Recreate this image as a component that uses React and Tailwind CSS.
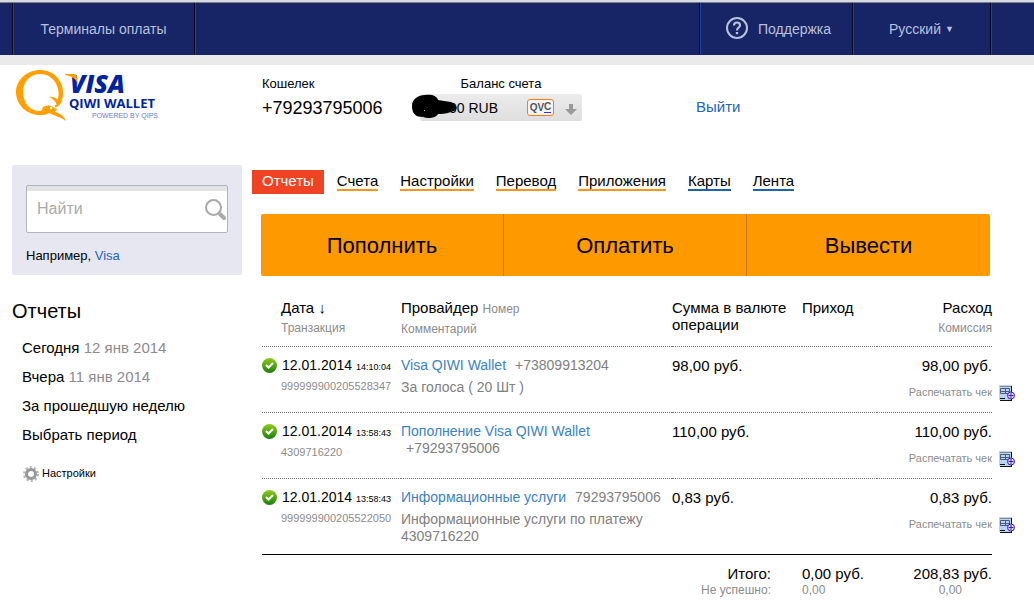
import React, { useState } from 'react';

const tabs = [
  { name: 'Счета', color: 'border-[#f7981d]' },
  { name: 'Настройки', color: 'border-[#f7981d]' },
  { name: 'Перевод', color: 'border-[#f7981d]' },
  { name: 'Приложения', color: 'border-[#f7981d]' },
  { name: 'Карты', color: 'border-[#1f63ad]' },
  { name: 'Лента', color: 'border-[#1f63ad]' },
];

const periods = [
  { name: 'Сегодня', date: '12 янв 2014' },
  { name: 'Вчера', date: '11 янв 2014' },
  { name: 'За прошедшую неделю' },
  { name: 'Выбрать период' },
];

const payments = [
  {
    id: '999999900205528347',
    date: '12.01.2014',
    time: '14:10:04',
    provider: 'Visa QIWI Wallet',
    number: '+73809913204',
    comment: 'За голоса ( 20 Шт )',
    sum: '98,00 руб.',
  },
  {
    id: '4309716220',
    date: '12.01.2014',
    time: '13:58:43',
    provider: 'Пополнение Visa QIWI Wallet',
    number: '+79293795006',
    numberBelow: true,
    sum: '110,00 руб.',
  },
  {
    id: '999999900205522050',
    date: '12.01.2014',
    time: '13:58:43',
    provider: 'Информационные услуги',
    number: '79293795006',
    comment: 'Информационные услуги по платежу 4309716220',
    sum: '0,83 руб.',
  },
];

const Logo = () => (
  <svg width="146" height="54" viewBox="0 0 146 54" role="img" aria-label="Visa QIWI Wallet" className="overflow-visible">
    <path
      fill="#ff9f00"
      fillRule="evenodd"
      d="M24 1C37 1 47 11 47 23C47 29 46 33 43 37L40 33C43 29 43 25 42 20C40 11 33 5 24 5C14 5 7 13 7 23C7 34 14 42 24 42C28 42 24 39 29 37C35 35 38 39 41 40L39 43C44 44 48 47 50 52C45 48 39 47 33 44C30 46 27 46 24 46C11 46 0 36 0 23C0 11 11 1 24 1Z"
    />
    <path fill="#ff9f00" d="M33 28c5-1 10 2 11 7l-3 3c0-4-3-8-8-10z" />
    <circle cx="35" cy="39" r="1.200" fill="#fff" />
    <circle cx="40" cy="37" r="1.200" fill="#ff9f00" />
    <text x="54" y="24" fontFamily="Open Sans" fontSize="25" fontWeight="800" fontStyle="italic" fill="#0023a0">
      VISA
    </text>
    <path fill="#ff9f00" d="M49 5h9c2 0 3 2 3 4l1 6C60 10 56 7 49 6z" />
    <text x="53" y="39" fontFamily="Open Sans" fontSize="13" fontWeight="700" fill="#0023a0">
      QIWI WALLET
    </text>
    <text x="76" y="49" fontFamily="Liberation Sans" fontSize="7" fill="#6f7cc0">
      POWERED BY QIPS
    </text>
  </svg>
);

const HelpIcon = () => (
  <svg width="24" height="24" viewBox="0 0 24 24" fill="none" stroke="#b9c0dc" strokeWidth="2">
    <circle cx="12" cy="11" r="10" />
    <path d="M9 8.500C9 6.500 10.300 5.500 12 5.500S15 6.500 15 8.200C15 10.500 12 10.500 12 13.500" strokeWidth="2.200" />
    <path d="M12 15v2.200" strokeWidth="2.400" />
  </svg>
);

const SearchIcon = () => (
  <svg width="21" height="21" viewBox="0 0 21 21" fill="none" stroke="#a9a9a9">
    <circle cx="8.500" cy="8.500" r="7.500" strokeWidth="2" />
    <path d="M13.500 13.500l2 2" strokeWidth="3" />
    <path d="M15.500 15.500l3.500 3.500" strokeWidth="4" strokeLinecap="round" />
  </svg>
);

const GearIcon = () => (
  <svg width="16" height="16" viewBox="0 0 16 16" fill="none">
    <circle cx="8" cy="8" r="6.500" stroke="#bbb" strokeWidth="3" strokeDasharray="2.100 1.984" />
    <circle cx="8" cy="8" r="4.500" stroke="#999" strokeWidth="3" />
  </svg>
);

const CheckIcon = () => (
  <svg width="15" height="15" viewBox="0 0 15 15" fill="none" className="mb-[2px] shrink-0">
    <defs>
      <linearGradient id="ok" x1="0" y1="0" x2="0" y2="1">
        <stop offset="0" stopColor="#8fcb1c" />
        <stop offset="1" stopColor="#1c7f0c" />
      </linearGradient>
    </defs>
    <circle cx="7.500" cy="7.500" r="7.500" fill="url(#ok)" />
    <path d="M4 7l2.500 2.500L11 5" stroke="#fff" strokeWidth="2" />
  </svg>
);

const ReceiptIcon = () => (
  <svg width="16" height="16" viewBox="0 0 16 16" fill="none">
    <path d="M0 0h13v15H0z" fill="#b9d3f7" />
    <path d="M12.500 1v15M1 15.500h12" stroke="#111" />
    <path d="M1 1.500h11" stroke="#888" />
    <path d="M1.500 3.500h9v5h-9zM1.500 6.500h9M6.500 3.500v5" stroke="#4a5a78" />
    <path d="M1 13.500h5" stroke="#111" />
    <circle cx="12" cy="10.500" r="3.500" fill="#e4e0ff" stroke="#3a18c8" />
    <path d="M12 8v5M9.500 10.500h5" stroke="#3a18c8" />
  </svg>
);

const Scribble = () => (
  <svg width="47" height="25" viewBox="0 0 47 25" className="absolute -left-[9px] top-0" aria-hidden="true">
    <path d="M1 12C1 5 7 1 14 1C21 0 26 2 27 6L33 7C38 8 42 7 45 12C47 15 44 17 40 18C34 20 30 20 27 20C25 24 17 25 12 23C5 23 1 20 1 12Z" />
    <path d="M13 16l1 1" stroke="#bbb" />
  </svg>
);

const App = () => {
  const [search, setSearch] = useState('');

  return (
    <div className="min-h-screen bg-white font-['Liberation_Sans',Arial,sans-serif] text-[15px] leading-[17px] text-black">
      <header className="border-b-10 border-[#eaeaea]">
        <div className="h-[3px] border-b border-[#808080] bg-[#d6dde2]" />
        <nav className="flex h-[52px] bg-[#172566] pl-3 pr-[43px] text-sm text-[#b9c0dc]">
          <a
            href="#terminals"
            className="flex w-[182px] items-center justify-center border-l border-[#02051c] shadow-[inset_1px_0_#1d43a0,1px_0_#02051c,2px_0_#1d43a0]"
          >
            Терминалы оплаты
          </a>
          <a
            href="#support"
            className="ml-auto flex w-[153px] items-center gap-[9px] border-l border-[#02051c] pl-[25px] shadow-[inset_1px_0_#1d43a0]"
          >
            <HelpIcon />
            Поддержка
          </a>
          <label className="flex w-[139px] items-center justify-center border-x border-[#02051c] shadow-[inset_1px_0_#1d43a0,1px_0_#1d43a0]">
            <span className="sr-only">Язык</span>
            <select className="h-6 appearance-none bg-transparent pr-1 leading-6" defaultValue="ru">
              <option value="ru">Русский</option>
            </select>
            <span className="text-[9px]">▼</span>
          </label>
        </nav>
      </header>

      <div className="flex h-[100px] px-4 pt-1">
        <div className="w-[246px] shrink-0">
          <Logo />
        </div>
        <div className="w-[158px] shrink-0 pt-[6px]">
          <div className="text-[13px]">Кошелек</div>
          <div className="pt-2 text-lg leading-[17px]">+79293795006</div>
        </div>
        <div className="w-[162px] shrink-0 pt-[6px]">
          <div className="text-center text-[13px]">Баланс счета</div>
          <button
            type="button"
            className="relative mt-[2px] flex h-[27px] w-full items-center rounded-xs bg-linear-to-b from-[#ececec] to-[#dedede] pl-[29px] pr-[5px] text-sm"
          >
            <Scribble />
            00 RUB
            <span className="ml-auto mr-[11px] flex h-[17px] w-[27px] items-center justify-center rounded-[3px] border border-[#ff7d0a] bg-[#f4f4f4] text-[10px] font-bold leading-3 text-[#555]">
              QV<span className="border-b border-[#3a2fd0] leading-[10px]">C</span>
            </span>
            <svg width="12" height="12" viewBox="0 0 12 12" fill="#999" className="mt-[3px]">
              <path d="M4 1h4v5h4L6 12 0 6h4z" />
            </svg>
          </button>
        </div>
        <div className="pl-[114px] pt-[29px]">
          <a href="#exit" className="text-[#1d65b8]">
            Выйти
          </a>
        </div>
      </div>

      <div className="flex gap-[10px] pl-3 pr-[19px]">
        <aside className="w-[230px] shrink-0">
          <form className="h-[110px] rounded-xs bg-[#e6e7f0] px-[14px] pt-5">
            <div className="flex h-[48px] items-center rounded-xs border border-[#b0b4bf] bg-white pr-[1px] shadow-[inset_0_5px_#e2e2e2]">
              <input
                type="text"
                aria-label="Поиск"
                placeholder="Найти"
                value={search}
                onChange={(e) => setSearch(e.target.value)}
                className="w-full min-w-0 bg-transparent pl-[10px] text-base outline-none placeholder:text-[#aaa]"
              />
              <button type="submit" aria-label="Найти">
                <SearchIcon />
              </button>
            </div>
            <p className="pt-[14px] text-[13px]">
              Например,{' '}
              <a href="#visa" className="text-[#1d65b8]">
                Visa
              </a>
            </p>
          </form>
          <h1 className="pb-4 pt-6 text-xl leading-6">Отчеты</h1>
          <ul className="flex flex-col gap-3 pl-[10px]">
            {periods.map((period) => (
              <li key={period.name}>
                <a href="#period">
                  {period.name} {period.date && <span className="text-[#8c8c8c]">{period.date}</span>}
                </a>
              </li>
            ))}
          </ul>
          <a href="#settings" className="flex items-center gap-[3px] pl-[11px] pt-[22px] text-[11px]">
            <GearIcon />
            Настройки
          </a>
        </aside>

        <main className="min-w-0 flex-1 pt-[5px]">
          <nav className="flex items-center gap-[22px]">
            <a href="#reports" className="-mr-[9px] bg-[#f04323] px-[10px] pb-[5px] pt-[3px] leading-4 text-white">
              Отчеты
            </a>
            {tabs.map((tab) => (
              <a key={tab.name} href="#tab" className={`border-b-2 leading-4 ${tab.color}`}>
                {tab.name}
              </a>
            ))}
          </nav>

          <div className="ml-[9px] mr-[25px] mt-5 grid h-[62px] grid-cols-3 divide-x divide-[#c97a05] overflow-hidden rounded-xs bg-[#ff9900] text-[22px]">
            <button type="button">Пополнить</button>
            <button type="button">Оплатить</button>
            <button type="button">Вывести</button>
          </div>

          <div className="pl-[10px] pt-[23px]">
            <table className="w-full table-fixed border-separate border-spacing-0 text-left [&_td]:align-top [&_th]:align-top [&_th]:font-normal">
              <colgroup>
                <col className="w-[139px]" />
                <col />
                <col className="w-[130px]" />
                <col className="w-[75px]" />
                <col className="w-[115px]" />
                <col className="w-[23px]" />
              </colgroup>
              <thead>
                <tr className="h-[48px] [&>th]:border-b [&>th]:border-dotted [&>th]:border-[#777]">
                  <th className="pl-[19px]">
                    Дата ↓
                    <div className="pt-1 text-xs text-[#8c8c8c]">Транзакция</div>
                  </th>
                  <th>
                    Провайдер <span className="text-xs text-[#8c8c8c]">Номер</span>
                    <div className="pt-1 text-xs text-[#8c8c8c]">Комментарий</div>
                  </th>
                  <th>Сумма в валюте операции</th>
                  <th>Приход</th>
                  <th className="text-right">
                    Расход
                    <div className="pt-1 text-xs text-[#8c8c8c]">Комиссия</div>
                  </th>
                </tr>
              </thead>
              <tbody>
                {payments.map((payment) => (
                  <tr
                    key={payment.id}
                    className="h-[66px] last:h-[76px] [&>td]:border-dotted [&>td]:border-[#777] [&>td]:pt-[10px] [&>td:not(:last-child)]:border-b last:[&>td]:border-solid last:[&>td]:border-black"
                  >
                    <td>
                      <div className="flex items-center gap-[5px] text-sm leading-[17px]">
                        <CheckIcon />
                        <span>
                          {payment.date} <span className="text-[9px]">{payment.time}</span>
                        </span>
                      </div>
                      <div className="pl-[19px] text-[11px] leading-[21px] text-[#8c8c8c]">{payment.id}</div>
                    </td>
                    <td className="text-sm leading-[17px] text-[#808080]">
                      <a href="#payment" className="text-[#3b83c0]">
                        {payment.provider}
                      </a>
                      <span className={payment.numberBelow ? 'block pl-[5px]' : 'pl-[9px]'}>{payment.number}</span>
                      {payment.comment && <div className="pr-2 pt-[5px]">{payment.comment}</div>}
                    </td>
                    <td>{payment.sum}</td>
                    <td />
                    <td className="text-right">
                      {payment.sum}
                      <a href="#check" className="block whitespace-nowrap pt-[10px] text-[11px] text-[#8c8c8c]">
                        Распечатать чек
                      </a>
                    </td>
                    <td>
                      <a href="#print" aria-label="Печать" className="flex justify-end pt-[28px]">
                        <ReceiptIcon />
                      </a>
                    </td>
                  </tr>
                ))}
              </tbody>
              <tfoot className="[&_td]:pt-[10px]">
                <tr>
                  <td />
                  <td />
                  <td className="pr-[31px] text-right">
                    Итого:
                    <div className="whitespace-nowrap text-xs leading-4 text-[#8c8c8c]">Не успешно:</div>
                  </td>
                  <td className="whitespace-nowrap">
                    0,00 руб.
                    <div className="text-xs leading-4 text-[#8c8c8c]">0,00</div>
                  </td>
                  <td className="text-right">
                    208,83 руб.
                    <div className="pr-[30px] text-xs leading-4 text-[#8c8c8c]">0,00</div>
                  </td>
                </tr>
              </tfoot>
            </table>
          </div>
        </main>
      </div>
    </div>
  );
};

export default App;
